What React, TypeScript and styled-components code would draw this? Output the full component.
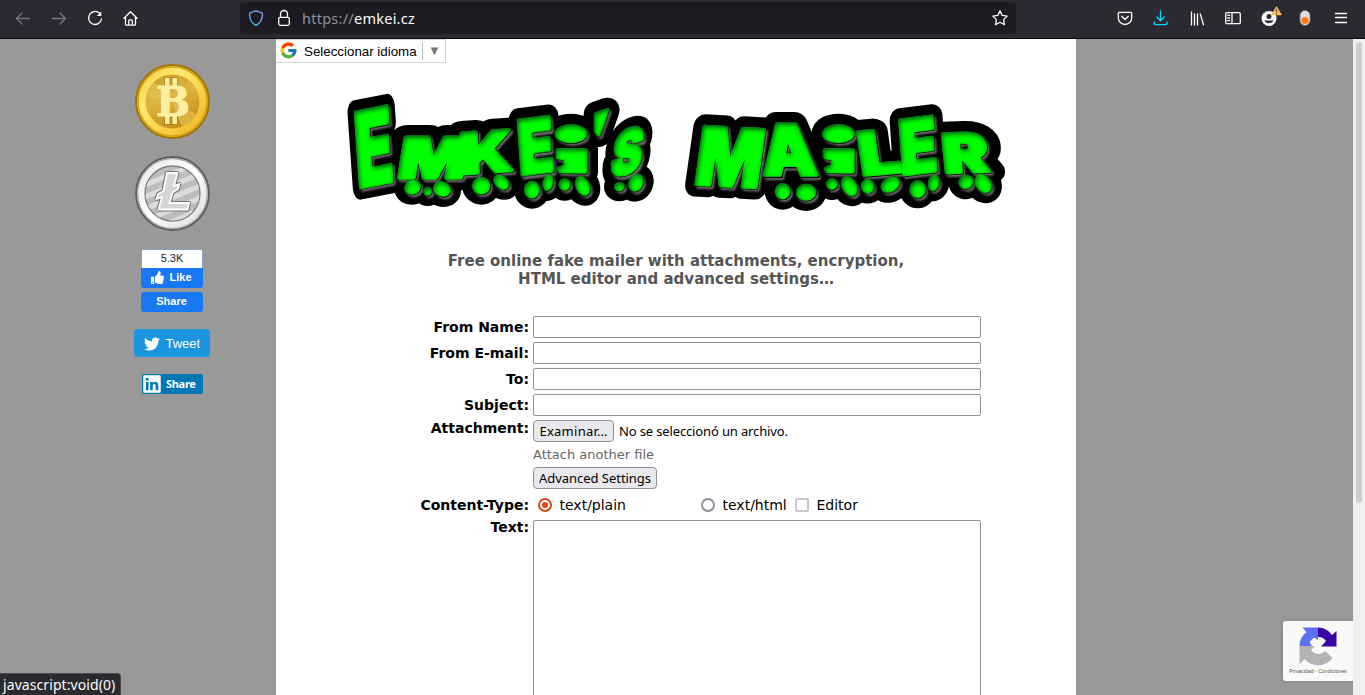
import React from "react";
import styled, { createGlobalStyle } from "styled-components";
import { FcGoogle } from "react-icons/fc";
import { FaTwitter, FaThumbsUp, FaLinkedin } from "react-icons/fa";

const GlobalStyle = createGlobalStyle`
  * { box-sizing: border-box; }
  body { margin: 0; overflow: hidden; background: #999; font-family: "DejaVu Sans", sans-serif; color: #000; }
`;

const uiFont = `"Noto Sans", "Open Sans", sans-serif`;

const Window = styled.div`
  position: relative;
  display: flex;
  flex-direction: column;
  width: 1365px;
  height: 695px;
  overflow: hidden;
`;

/* ---------- browser toolbar ---------- */

const Toolbar = styled.header`
  display: flex;
  align-items: center;
  flex: none;
  height: 39px;
  padding: 0 16px 3px 15px;
  background: #2b2a33;
  border-bottom: 1px solid #0c0c0d;
`;

const NavButtons = styled.nav`
  display: flex;
  gap: 20px;
  width: 225px;
`;

const AddressBar = styled.div`
  display: flex;
  align-items: center;
  width: 776px;
  height: 32px;
  padding: 0 8px;
  border-radius: 4px;
  background: #1c1b22;
`;

const Url = styled.span`
  flex: 1;
  margin-left: 10px;
  font: 14.5px/20px ${uiFont};
  letter-spacing: 0.25px;
  color: #fbfbfe;
`;

const Scheme = styled.span`
  color: #8f8f98;
`;

const Tools = styled.div`
  display: flex;
  justify-content: space-between;
  width: 232px;
  margin-left: auto;
`;

const Glyph = styled.svg<{ $color?: string }>`
  display: block;
  flex: none;
  width: 16px;
  height: 16px;
  fill: none;
  stroke: ${(p) => p.$color ?? "#fbfbfe"};
  stroke-width: 1.3;
  stroke-linecap: round;
  stroke-linejoin: round;
  overflow: visible;
`;

const LockGlyph = styled(Glyph)`
  margin-left: 12px;
`;

/* ---------- page frame ---------- */

const Page = styled.div`
  display: flex;
  flex: 1;
  min-height: 0;
`;

const Sidebar = styled.aside`
  display: flex;
  flex-direction: column;
  align-items: center;
  width: 276px;
  padding: 25px 0 0 68px;
`;

const Content = styled.main`
  width: 800px;
  background: #fff;
`;

const ScrollTrack = styled.div`
  width: 12px;
  margin-left: auto;
  padding: 3px 3px 0;
  background: #f0f0f0;
`;

const ScrollThumb = styled.div`
  height: 461px;
  border-radius: 3px;
  background: #cdcdcd;
`;

/* ---------- sidebar ---------- */

const Coin = styled.svg`
  display: block;
  flex: none;
  width: 75px;
  height: 75px;
  margin: 0 0 17px 1px;
`;

const LikeCount = styled.div`
  width: 62px;
  height: 19px;
  margin-top: 1px;
  border: 1px solid #8b9dc3;
  border-bottom: 0;
  border-radius: 2px 2px 0 0;
  background: #fff;
  color: #1d2129;
  font: 11px/17px "Liberation Sans", sans-serif;
  text-align: center;
`;

const FacebookButton = styled.div<{ $joined?: boolean }>`
  display: flex;
  align-items: center;
  justify-content: center;
  gap: 5px;
  width: 62px;
  height: 20px;
  margin-bottom: ${(p) => (p.$joined ? 4 : 17)}px;
  padding: 0 1px 2px 0;
  border-radius: ${(p) => (p.$joined ? "0 0 3px 3px" : "3px")};
  background: #1877f2;
  color: #fff;
  font: bold 11px/18px "Liberation Sans", sans-serif;
`;

const TweetButton = styled.div`
  display: flex;
  align-items: center;
  gap: 5.5px;
  width: 76px;
  height: 28px;
  padding: 1px 0 0 10px;
  border-radius: 4px;
  background: #1b95e0;
  color: #fff;
  font: 13px/28px "Liberation Sans", sans-serif;
`;

const LinkedInButton = styled.div`
  display: flex;
  align-items: center;
  gap: 4px;
  width: 61px;
  height: 20px;
  margin: 17px 0 0 1px;
  border-radius: 2px;
  background: #0077b5;
  color: #fff;
  font: bold 11px/20px ${uiFont};
  letter-spacing: -0.3px;
`;

/* ---------- main column ---------- */

const Translate = styled.div`
  display: flex;
  align-items: center;
  width: 170px;
  height: 24px;
  padding: 0 0 1px 3px;
  border: 1px solid #d5d5d5;
  border-left: 0;
  font: 13.33px/22px "Liberation Sans", sans-serif;
`;

const TranslateLabel = styled.span`
  width: 119px;
  margin-left: 6px;
  padding-top: 1px;
  border-right: 1px solid #bbb;
  line-height: 17px;
`;

const TranslateArrow = styled.span`
  margin-left: 5px;
  padding-top: 1px;
  color: #767676;
  font-size: 13px;
`;

const Wordmark = styled.svg`
  display: block;
  width: 680px;
  height: 136px;
  margin: 21px 0 0 60px;
  font-family: Inter, "DejaVu Sans", sans-serif;
  font-weight: 900;
`;

const Tagline = styled.h2`
  margin: 32px 0 28px;
  color: #555;
  font: bold 15px/18px "DejaVu Sans", sans-serif;
  text-align: center;
`;

const Form = styled.div`
  display: flex;
  flex-direction: column;
  padding-left: 130px;
`;

const Row = styled.div<{ $height?: number }>`
  display: flex;
  height: ${(p) => p.$height ?? 26}px;
`;

const Label = styled.label<{ $line?: number }>`
  width: 123px;
  margin-right: 4px;
  font-size: 14px;
  font-weight: bold;
  line-height: ${(p) => p.$line ?? 22}px;
  text-align: right;
  white-space: nowrap;
`;

const Input = styled.input`
  width: 448px;
  height: 22px;
  padding: 1px 3px;
  border: 1px solid #8f8f9d;
  border-radius: 2px;
  background: #fff;
`;

const TextArea = styled.textarea`
  width: 448px;
  height: 260px;
  border: 1px solid #8f8f9d;
  border-radius: 2px;
  resize: none;
`;

const Button = styled.button<{ $width: number; $spacing?: number }>`
  width: ${(p) => p.$width}px;
  height: 22px;
  padding: 0;
  border: 1px solid #8f8f9d;
  border-radius: 4px;
  background: #e9e9ed;
  color: #000;
  font: 13px/18px ${uiFont};
  letter-spacing: ${(p) => p.$spacing ?? -0.04}px;
  white-space: nowrap;
`;

const FileStatus = styled.span`
  margin-left: 5px;
  font: 13px/22px ${uiFont};
  letter-spacing: -0.14px;
`;

const AttachLink = styled.a`
  color: #666;
  font-size: 13px;
  line-height: 17px;
`;

const Choice = styled.span<{ $width?: number }>`
  display: flex;
  align-items: center;
  gap: 7.5px;
  width: ${(p) => (p.$width ? p.$width + "px" : "auto")};
  height: 22px;
  font-size: 14px;
`;

const Radio = styled.span<{ $checked?: boolean }>`
  width: 14px;
  height: 14px;
  border: 2px solid ${(p) => (p.$checked ? "#dd4814" : "#8f8f9d")};
  border-radius: 50%;
  background: ${(p) => (p.$checked ? "#dd4814" : "#fff")};
  background-clip: content-box;
  padding: 2px;
`;

const Checkbox = styled.span`
  width: 14px;
  height: 14px;
  border: 2px solid #c7c7ce;
  border-radius: 2px;
`;

/* ---------- overlays ---------- */

const StatusBar = styled.div`
  position: absolute;
  left: 0;
  bottom: 0;
  width: 121px;
  height: 22px;
  padding-left: 3px;
  border: 1px solid #4a4a4f;
  border-width: 1px 1px 0 0;
  border-radius: 0 4px 0 0;
  background: #2b2a2f;
  color: #fbfbfe;
  font: 14px/21px ${uiFont};
  letter-spacing: 0.08px;
  white-space: nowrap;
`;

const Captcha = styled.div`
  position: absolute;
  right: 12px;
  top: 621px;
  width: 70px;
  height: 60px;
  padding-top: 5px;
  border-radius: 3px 0 0 3px;
  background: #f9f9f9;
  box-shadow: 0 0 4px #808080;
  clip-path: inset(-6px 0 -6px -6px);
  color: #555;
  font: 5.2px/10px "Liberation Sans", sans-serif;
  text-align: center;
  white-space: nowrap;
`;

const CaptchaMark = styled.svg`
  display: block;
  width: 40px;
  height: 40px;
  margin: 0 auto;
`;

interface LetterSpec {
  char: string;
  x: number;
  base: number;
  width: number;
  height: number;
  tilt?: number;
  slant?: number;
}

const letters: LetterSpec[] = [
  { char: "E", x: 64, base: 312, width: 114, height: 228, tilt: -11, slant: 4 },
  { char: "M", x: 180, base: 282, width: 204, height: 122, tilt: 0, slant: -9 },
  { char: "K", x: 374, base: 270, width: 158, height: 122, tilt: -4, slant: 3 },
  { char: "E", x: 550, base: 273, width: 108, height: 164, tilt: -7, slant: 4 },
  { char: "S", x: 820, base: 280, width: 92, height: 126, tilt: -14, slant: -8 },
  { char: "M", x: 1070, base: 300, width: 200, height: 174, tilt: 3, slant: -8 },
  { char: "A", x: 1282, base: 274, width: 166, height: 152, tilt: 0, slant: 5 },
  { char: "L", x: 1576, base: 274, width: 122, height: 130, tilt: -5, slant: 8 },
  { char: "E", x: 1694, base: 273, width: 114, height: 164, tilt: -7, slant: 4 },
  { char: "R", x: 1824, base: 266, width: 138, height: 116, tilt: -2, slant: 6 },
];

const toes: number[][] = [
  [230, 310, 20, 16, -20], [275, 322, 7, 8, 0], [318, 315, 22, 17, 25],
  [436, 305, 22, 21, 0], [496, 295, 21, 13, 40], [588, 317, 18, 21, 0],
  [636, 296, 10, 19, 10], [686, 301, 12, 13, 0], [740, 306, 15, 25, -25],
  [850, 308, 10, 8, 0], [900, 296, 16, 22, 25], [1340, 322, 18, 19, 0],
  [1410, 325, 25, 20, 0], [1488, 300, 12, 12, 0], [1540, 307, 16, 26, -30],
  [1595, 307, 14, 16, -20], [1663, 302, 25, 16, -30], [1745, 316, 19, 21, 0],
  [1793, 297, 11, 19, 10], [1890, 294, 17, 15, -30], [1942, 299, 17, 25, -35],
];

const Toes = ({ grow = 0 }: { grow?: number }) => (
  <>
    {toes.map(([cx, cy, rx, ry, r], i) => (
      <ellipse key={i} cx={cx} cy={cy} rx={rx + grow} ry={ry + grow} transform={`rotate(${r} ${cx} ${cy})`} />
    ))}
  </>
);

const StubbyI = ({ x }: { x: number }) => (
  <>
    <ellipse cx={x + 50} cy={149} rx={43} ry={23} />
    <path d={`M${x + 10} 198H${x + 94}V264L${x + 18} 262L${x + 12} 254L${x + 32} 246L${x + 34} 224L${x + 10} 220Z`} />
  </>
);

const Logo = () => (
  <Wordmark viewBox="0 0 2040 408">
    <defs>
      <g id="letters">
        {letters.map((l, i) => (
          <text
            key={i}
            fontSize={l.height / 0.727}
            textLength={l.width}
            lengthAdjust="spacingAndGlyphs"
            transform={`translate(${l.x} ${l.base}) skewY(${l.tilt ?? 0}) skewX(${l.slant ?? 0})`}
          >
            {l.char}
          </text>
        ))}
        <StubbyI x={655} />
        <StubbyI x={1457} />
        <path d="M780 90L814 78L788 152L780 142Z" />
      </g>
      <g id="marks">
        <use href="#letters" />
        <Toes />
      </g>
      <filter id="bevel" x="-2%" y="-5%" width="104%" height="110%" colorInterpolationFilters="sRGB">
        <feComponentTransfer in="SourceAlpha" result="inv">
          <feFuncA type="table" tableValues="1 0" />
        </feComponentTransfer>
        <feGaussianBlur in="inv" stdDeviation="8" result="soft" />
        <feOffset in="soft" dx="4" dy="5" result="moved" />
        <feFlood floodColor="#004a18" floodOpacity="1" />
        <feComposite in2="moved" operator="in" />
        <feComposite in2="SourceAlpha" operator="in" result="shade" />
        <feMerge>
          <feMergeNode in="SourceGraphic" />
          <feMergeNode in="shade" />
        </feMerge>
      </filter>
      <filter id="soften" x="-2%" y="-5%" width="104%" height="110%">
        <feGaussianBlur stdDeviation="2.5" />
      </filter>
    </defs>
    <use href="#letters" fill="#000" stroke="#000" strokeWidth={74} strokeLinejoin="round" />
    <Toes grow={36} />
    <use href="#marks" x={6} y={7} fill="#777" stroke="#777" strokeWidth={12} strokeLinejoin="round" filter="url(#soften)" />
    <use href="#marks" x={1} y={1} fill="#000" stroke="#000" strokeWidth={14} strokeLinejoin="round" />
    <use href="#marks" fill="#00ff00" stroke="#00ff00" strokeWidth={11} strokeLinejoin="round" filter="url(#bevel)" />
  </Wordmark>
);

const Bitcoin = () => (
  <Coin viewBox="0 0 75 75">
    <defs>
      <linearGradient id="gold" x2="1" y2="1">
        <stop offset="0" stopColor="#f5c93c" />
        <stop offset=".35" stopColor="#ffe873" />
        <stop offset=".6" stopColor="#fbd348" />
        <stop offset="1" stopColor="#e8ad1e" />
      </linearGradient>
      <linearGradient id="goldFace" x2="0.4" y2="1">
        <stop offset="0" stopColor="#c99a26" />
        <stop offset=".5" stopColor="#dfb440" />
        <stop offset="1" stopColor="#c8921c" />
      </linearGradient>
    </defs>
    <circle cx="37.5" cy="37.5" r="36.4" fill="url(#gold)" stroke="#a07400" strokeWidth="2" />
    <circle cx="37.5" cy="37.5" r="34.5" fill="none" stroke="#d5a216" strokeWidth="1.5" />
    <circle cx="37.5" cy="37.5" r="27" fill="url(#goldFace)" />
    <path d="M37 37L11 34A27 27 0 0 1 19 18ZM37 37L61 50A27 27 0 0 1 47 63Z" fill="#eac65b" opacity=".6" />
    <g fill="#faf0a0" stroke="#8d6710" strokeOpacity=".55" strokeWidth="1.6" paintOrder="stroke">
      <rect x="30" y="14" width="4.500" height="8" /><rect x="37.500" y="14" width="4.500" height="8" />
      <rect x="30" y="52" width="4.500" height="8" /><rect x="37.500" y="52" width="4.500" height="8" />
    </g>
    <g fill="#faf0a0" stroke="#faf0a0" strokeWidth="1">
      <text x="21" y="52" fontFamily="DejaVu Serif, serif" fontWeight="bold" fontSize="41" textLength="34" lengthAdjust="spacingAndGlyphs">B</text>
    </g>
  </Coin>
);

const litecoinMark =
  "M32 17H42.500L39 30L44.500 28L43 33L37.500 36.500L34.500 47H54L52.500 53.500H23.500L27 41L21.500 43L23 38L28.500 35Z";

const Litecoin = () => (
  <Coin viewBox="0 0 75 75">
    <defs>
      <linearGradient id="silver" x2="1" y2="1">
        <stop offset="0" stopColor="#e6e6e6" />
        <stop offset=".5" stopColor="#fff" />
        <stop offset="1" stopColor="#d8d8d8" />
      </linearGradient>
      <clipPath id="face"><circle cx="37.5" cy="37.5" r="27" /></clipPath>
    </defs>
    <circle cx="37.5" cy="37.5" r="36.4" fill="url(#silver)" stroke="#5e5e5e" strokeWidth="2" />
    <circle cx="37.5" cy="37.5" r="34.8" fill="none" stroke="#aaa" strokeWidth="1.2" />
    <circle cx="37.5" cy="37.5" r="27.5" fill="#bcbcbc" stroke="#808080" strokeWidth="1.3" />
    <g clipPath="url(#face)" stroke="#dcdcdc" strokeWidth="5">
      <path d="M5 31L70 4M5 43L70 16M5 55L70 28M5 67L70 40M5 79L70 52" />
    </g>
    <path d={litecoinMark} fill="#777" stroke="#777" strokeWidth="4" strokeLinejoin="round" />
    <path d={litecoinMark} fill="#d6d6d6" stroke="#fff" strokeWidth="1.800" />
  </Coin>
);

const Recaptcha = () => (
  <CaptchaMark viewBox="0 0 40 40">
    <path d="M20 1.500H4.500L8.500 6A18 18 0 0 0 1.500 20H14L11.500 16L16 11.500L20 14Z" fill="#5a72f0" />
    <path d="M20 1.500A18 18 0 0 1 34 9L38.500 5V20.500H23L28 15A9 9 0 0 0 20 11Z" fill="#3a07a6" />
    <path d="M1.500 20H17L13 24A9 9 0 0 0 27 25L34.500 32A18 18 0 0 1 6.500 33L1.500 38Z" fill="#b4b4b6" />
  </CaptchaMark>
);

const fields = ["From Name:", "From E-mail:", "To:", "Subject:"];

export default function App() {
  return (
    <Window>
      <GlobalStyle />
      <Toolbar>
        <NavButtons>
          <Glyph viewBox="0 0 16 16" $color="#77767f"><path d="M14.500 8.500H1.500M7 3L1.500 8.500L7 14" /></Glyph>
          <Glyph viewBox="0 0 16 16" $color="#77767f"><path d="M1.500 8.500H14.500M9 3L14.500 8.500L9 14" /></Glyph>
          <Glyph viewBox="0 0 16 16"><path d="M12.800 3.500A6.500 6.500 0 1 0 14.500 9" /><path d="M14.300 1.500V6H9.800Z" fill="#fbfbfe" stroke="none" /></Glyph>
          <Glyph viewBox="0 0 16 16"><path d="M.9 8.300L7.500 1.800L14.100 8.300M2.500 7V14.300A.9.9 0 0 0 3.400 15.200H11.600A.9.9 0 0 0 12.500 14.300V7M5.700 15V10.800A1 1 0 0 1 6.700 9.800H8.300A1 1 0 0 1 9.300 10.800V15" /></Glyph>
        </NavButtons>
        <AddressBar>
          <Glyph viewBox="0 0 16 16">
            <defs>
              <linearGradient id="shield" x1="0" x2="1" y1="1" y2="0">
                <stop offset="0" stopColor="#20c8f4" />
                <stop offset="1" stopColor="#a79cf5" />
              </linearGradient>
            </defs>
            <path stroke="url(#shield)" d="M8 .8L14.300 3C14.700 8.500 13 13 8 15.300C3 13 1.300 8.500 1.700 3Z" />
          </Glyph>
          <LockGlyph viewBox="0 0 16 16"><rect x="2.700" y="7.300" width="10.600" height="8" rx="1.500" /><path d="M4.500 7V4A3.500 3.500 0 0 1 11.500 4V7" /></LockGlyph>
          <Url><Scheme>https://</Scheme>emkei.cz</Url>
          <Glyph viewBox="0 0 16 16"><path d="M8 .9L10.200 5.400L15.200 6.100L11.600 9.600L12.400 14.700L8 12.300L3.600 14.700L4.400 9.600L.8 6.100L5.800 5.400Z" /></Glyph>
        </AddressBar>
        <Tools>
          <Glyph viewBox="0 0 16 16"><path d="M2.500 2.300H13.500A1.200 1.200 0 0 1 14.700 3.500V7.800A6.700 6.700 0 0 1 1.300 7.800V3.500A1.200 1.200 0 0 1 2.500 2.300ZM4.700 6.300L8 9.500L11.300 6.300" /></Glyph>
          <Glyph viewBox="0 0 16 16" $color="#00ddff"><path d="M7.500 .8V10.800M3.800 7L7.500 10.800L11.200 7M1.200 12V13.300A1.400 1.400 0 0 0 2.600 14.700H12.600A1.400 1.400 0 0 0 14 13.300V12" /></Glyph>
          <Glyph viewBox="0 0 16 16"><path d="M2.500 2V15M5.500 4V15M8.500 4V15M11.300 4L14.500 14.800" /></Glyph>
          <Glyph viewBox="0 0 16 16"><rect x=".7" y="2.700" width="14.600" height="11" rx="1.300" /><path d="M7 2.700V13.700M2.700 5.300H4.700M2.700 8H4.700M2.700 10.700H4.700" /></Glyph>
          <Glyph viewBox="0 0 16 16">
            <circle cx="8" cy="8.500" r="7.500" fill="#fbfbfe" stroke="none" />
            <circle cx="8" cy="6.500" r="2.500" fill="#2b2a33" stroke="none" />
            <path d="M3.500 10.500H12.500C11.500 14 4.500 14 3.500 10.500Z" fill="#2b2a33" stroke="none" />
            <path d="M15.500 -3L20 4.500H11Z" fill="#ffbd4f" stroke="#ffbd4f" />
            <path d="M15.500 -.8V1.800M15.500 3.600V3.800" stroke="#5b5b66" />
          </Glyph>
          <Glyph viewBox="0 0 16 16">
            <rect x="3" y=".5" width="10" height="15" rx="5" fill="#dfdfdf" stroke="#77777c" strokeWidth=".8" />
            <circle cx="8" cy="10.500" r="3.500" fill="#ff7817" stroke="none" />
          </Glyph>
          <Glyph viewBox="0 0 16 16"><path d="M2.500 3.500H13.500M2.500 7.500H13.500M2.500 12.500H13.500" /></Glyph>
        </Tools>
      </Toolbar>

      <Page>
        <Sidebar>
          <Bitcoin />
          <Litecoin />
          <LikeCount>5.3K</LikeCount>
          <FacebookButton $joined><FaThumbsUp size={13} />Like</FacebookButton>
          <FacebookButton>Share</FacebookButton>
          <TweetButton><FaTwitter size={16} />Tweet</TweetButton>
          <LinkedInButton><FaLinkedin size={20} />Share</LinkedInButton>
        </Sidebar>

        <Content>
          <Translate>
            <FcGoogle size={19} />
            <TranslateLabel>Seleccionar idioma</TranslateLabel>
            <TranslateArrow>▼</TranslateArrow>
          </Translate>
          <Logo />
          <Tagline>
            Free online fake mailer with attachments, encryption,
            <br />
            HTML editor and advanced settings…
          </Tagline>
          <Form>
            {fields.map((name) => (
              <Row key={name}>
                <Label>{name}</Label>
                <Input />
              </Row>
            ))}
            <Row>
              <Label $line={17}>Attachment:</Label>
              <Button $width={81} $spacing={0.25}>Examinar…</Button>
              <FileStatus>No se seleccionó un archivo.</FileStatus>
            </Row>
            <Row $height={21}>
              <Label />
              <AttachLink>Attach another file</AttachLink>
            </Row>
            <Row $height={27}>
              <Label />
              <Button $width={124}>Advanced Settings</Button>
            </Row>
            <Row>
              <Label>Content-Type:</Label>
              <Choice $width={5} />
              <Choice $width={163}><Radio $checked />text/plain</Choice>
              <Choice $width={94}><Radio />text/html</Choice>
              <Choice><Checkbox />Editor</Choice>
            </Row>
            <Row $height={260}>
              <Label $line={15}>Text:</Label>
              <TextArea />
            </Row>
          </Form>
        </Content>
        <ScrollTrack><ScrollThumb /></ScrollTrack>
      </Page>

      <StatusBar>javascript:void(0)</StatusBar>
      <Captcha><Recaptcha />Privacidad - Condiciones</Captcha>
    </Window>
  );
}
